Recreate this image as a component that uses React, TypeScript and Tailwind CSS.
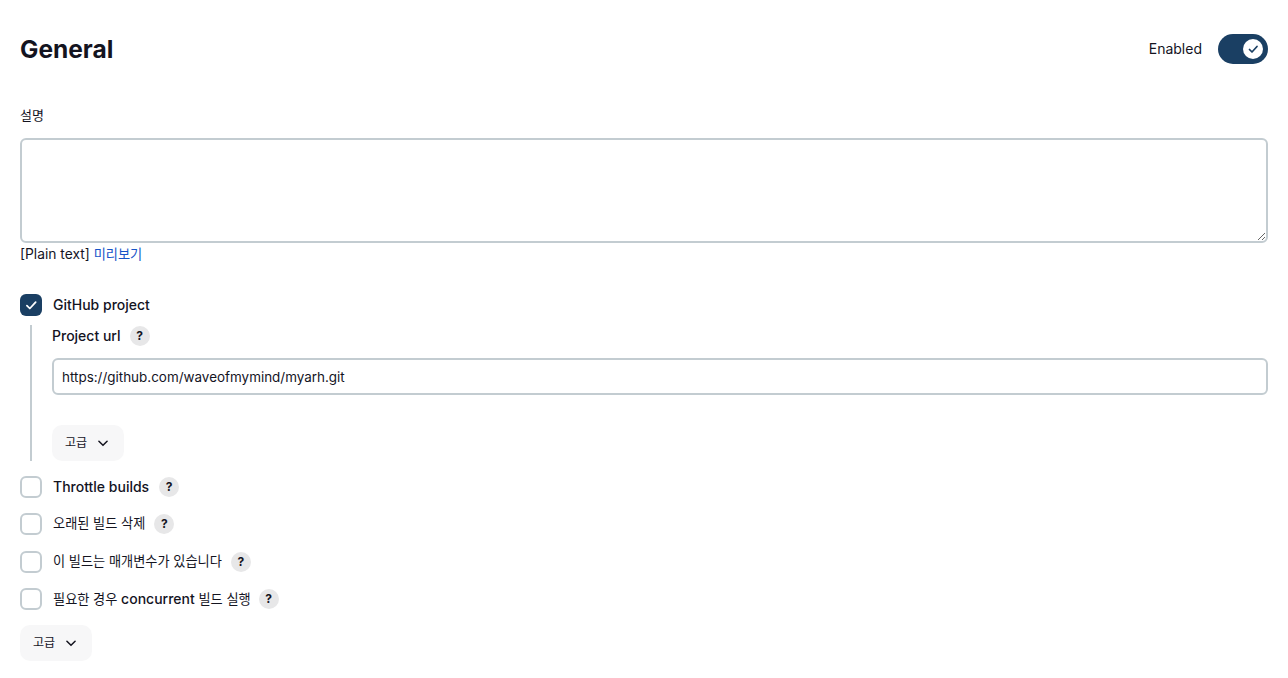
const FONT = "font-['Inter','Noto_Sans_CJK_KR',sans-serif]";

const Help = () => (
  <span className="flex h-5 w-5 shrink-0 items-center justify-center rounded-full bg-[#e7e7e8] text-xs font-bold text-[#14141f]">
    ?
  </span>
);

const Check = ({ size, weight = 3 }: { size: number; weight?: number }) => (
  <svg width={size} height={size} viewBox="0 0 24 24" fill="none" strokeWidth={weight} strokeLinecap="round" strokeLinejoin="round" className="stroke-current">
    <path d="M5 13l5 5L20 7" />
  </svg>
);

const Advanced = () => (
  <button className="flex h-9 w-[72px] items-center gap-[9px] rounded-[10px] bg-[#f7f7f8] pl-[13px] text-xs font-normal text-[#14141f]">
    고급
    <svg width="14" height="14" viewBox="0 0 24 24" fill="none" stroke="currentColor" strokeWidth="2.6" strokeLinecap="round" strokeLinejoin="round">
      <path d="M5 9l7 7 7-7" />
    </svg>
  </button>
);

const Option = ({ label, gap = "mr-[10px]" }: { label: React.ReactNode; gap?: string }) => (
  <div className="flex h-[22px] items-center">
    <span className="h-[22px] w-[22px] shrink-0 rounded-md border-2 border-[#c3ccd1] bg-white" />
    <span className={`ml-[11px] ${gap} text-[13.2px] font-normal text-[#14141f]`}>{label}</span>
    <Help />
  </div>
);

export default function App() {
  return (
    <div className={`${FONT} h-[678px] overflow-hidden bg-white px-5 text-[#14141f]`}>
      <div className="flex h-[98px] items-center justify-between">
        <h1 className="text-[24.5px] font-bold">General</h1>
        <div className="flex items-center gap-4">
          <span className="text-sm font-normal">Enabled</span>
          <div className="flex h-[30px] w-[50px] items-center justify-end rounded-full bg-[#1a3f63] pr-[5px]">
            <span className="flex h-5 w-5 items-center justify-center rounded-full bg-white text-[#1a3f63]">
              <Check size={12} weight={3.4} />
            </span>
          </div>
        </div>
      </div>

      <label className="block h-10 pt-2 text-[13px] font-normal leading-[18px]">설명</label>
      <textarea className="block h-[105px] w-full rounded-md border-2 border-[#c3ccd1] bg-white outline-none" />
      <p className="mt-[2px] text-[13.8px] leading-[18px]">
        [Plain text] <span className="text-[13.2px] text-[#1654c8]">미리보기</span>
      </p>

      <div className="mt-[31px] flex h-[22px] items-center">
        <span className="flex h-[22px] w-[22px] items-center justify-center rounded-md bg-[#1a3f63] text-white">
          <Check size={14} />
        </span>
        <span className="ml-[11px] text-sm font-[450]">GitHub project</span>
      </div>

      <div className="ml-[10px] mt-[9px] flex h-[136px] flex-col border-l-2 border-[#c3ccd1] pl-5">
        <div className="mt-px flex h-5 items-center gap-[9px]">
          <span className="text-sm font-[450]">Project url</span>
          <Help />
        </div>
        <input
          readOnly
          value="https://github.com/waveofmymind/myarh.git"
          className="mt-3 h-[37px] w-full rounded-md border-2 border-[#c3ccd1] bg-white px-2 text-[13.45px] font-normal outline-none"
        />
        <div className="mt-[30px]">
          <Advanced />
        </div>
      </div>

      <div className="mt-[15px] flex flex-col gap-[15.4px]">
        <Option label={<span className="text-sm font-[450]">Throttle builds</span>} />
        <Option label="오래된 빌드 삭제" gap="mr-[9px]" />
        <Option label="이 빌드는 매개변수가 있습니다" gap="mr-[9px]" />
        <Option
          label={
            <>
              필요한 경우 <span className="text-sm font-[450]">concurrent</span> 빌드 실행
            </>
          }
          gap="mr-2"
        />
      </div>

      <div className="mt-[15px]">
        <Advanced />
      </div>
    </div>
  );
}
